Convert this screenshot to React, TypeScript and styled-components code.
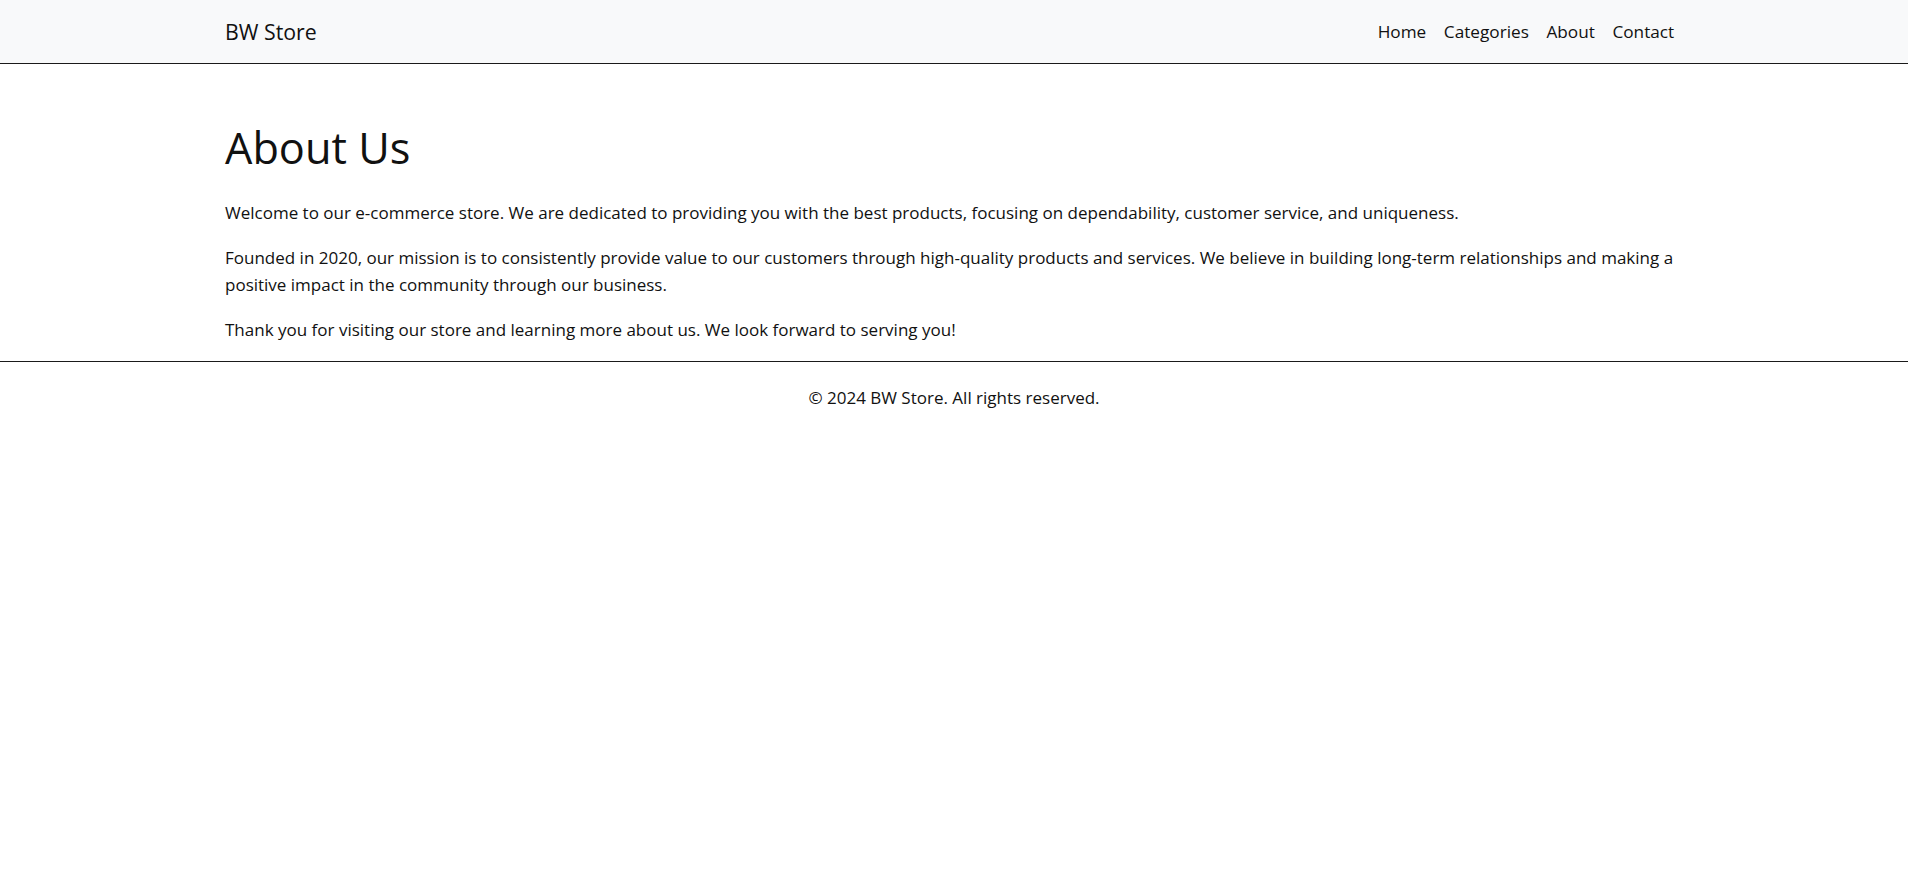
import React from "react";
import styled, { createGlobalStyle } from "styled-components";

const GlobalStyle = createGlobalStyle`
  html, body {
    margin: 0;
    padding: 0;
    background: #ffffff;
  }
  body {
    font-family: "Open Sans", "Noto Sans", sans-serif;
    font-size: 17px;
    line-height: 27px;
    color: #111111;
  }
`;

const Page = styled.div`
  display: flex;
  flex-direction: column;
  min-height: 100vh;
`;

const Container = styled.div`
  width: 1458px;
  margin: 0 auto;
  box-sizing: border-box;
`;

const NavBar = styled.header`
  background: #f8f9fa;
  border-bottom: 1px solid #1a1a1a;
`;

const NavInner = styled(Container)`
  height: 63px;
  display: flex;
  align-items: center;
  justify-content: space-between;
`;

const Brand = styled.a`
  font-size: 21.3px;
  color: #111111;
  text-decoration: none;
  line-height: 33px;
`;

const NavList = styled.nav`
  display: flex;
  align-items: center;
`;

const NavLink = styled.a`
  font-size: 17.2px;
  color: #111111;
  text-decoration: none;
  padding: 8px 8.8px;
  line-height: 26px;
`;

const Main = styled(Container)`
  padding-top: 58px;
`;

const Title = styled.h1`
  font-size: 43.3px;
  font-weight: 400;
  line-height: 51px;
  margin: 0 0 26.4px;
  color: #111111;
`;

const Paragraph = styled.p`
  margin: 0 0 18px;
`;

const Footer = styled.footer`
  border-top: 1px solid #1a1a1a;
  padding: 22px 0;
  text-align: center;
`;

export default function App() {
  return (
    <>
      <GlobalStyle />
      <Page>
        <NavBar>
          <NavInner>
            <Brand href="#">BW Store</Brand>
            <NavList>
              <NavLink href="#">Home</NavLink>
              <NavLink href="#">Categories</NavLink>
              <NavLink href="#">About</NavLink>
              <NavLink href="#">Contact</NavLink>
            </NavList>
          </NavInner>
        </NavBar>
        <Main>
          <Title>About Us</Title>
          <Paragraph>
            Welcome to our e-commerce store. We are dedicated to providing you with the best products, focusing on
            dependability, customer service, and uniqueness.
          </Paragraph>
          <Paragraph>
            Founded in 2020, our mission is to consistently provide value to our customers through high-quality products
            and services. We believe in building long-term relationships and making a positive impact in the community
            through our business.
          </Paragraph>
          <Paragraph>
            Thank you for visiting our store and learning more about us. We look forward to serving you!
          </Paragraph>
        </Main>
        <Footer>© 2024 BW Store. All rights reserved.</Footer>
      </Page>
    </>
  );
}
